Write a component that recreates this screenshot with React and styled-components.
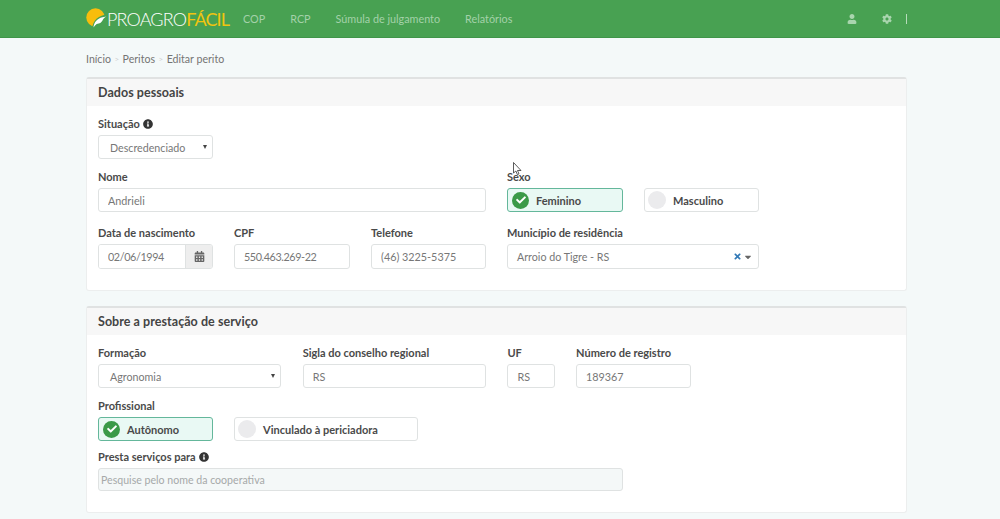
import React from "react";
import styled, { createGlobalStyle } from "styled-components";
import { FaInfoCircle, FaCalendarAlt, FaUser, FaCog, FaCheck, FaTimes, FaCaretDown } from "react-icons/fa";

const GlobalStyle = createGlobalStyle`
  html, body {
    margin: 0;
    padding: 0;
    background: #f4f9f9;
    color: #444;
    font-family: "Lato", "Open Sans", sans-serif;
  }
  * { box-sizing: border-box; }
`;

const Page = styled.div`
  position: relative;
  height: 519px;
  overflow: hidden;
`;

const Header = styled.header`
  height: 38px;
  background: #48a152;
  border-bottom: 1px solid #3f9549;
  padding: 0 93px 0 86px;
  display: flex;
  align-items: center;
`;

const Logo = styled.div`
  width: 144px;
  display: flex;
  align-items: center;
  margin-right: 13px;
  svg { flex: none; }
`;

const LogoText = styled.span`
  font-family: "Lato", sans-serif;
  font-weight: 300;
  font-size: 18px;
  letter-spacing: -0.85px;
  color: #fff;
  white-space: nowrap;
  b { font-weight: 400; color: #f2c40f; }
`;

const Nav = styled.nav`
  display: flex;
  gap: 25px;
  flex: 1;
`;

const NavLink = styled.a`
  font-size: 10.8px;
  color: #a4d1a9;
`;

const HeaderIcons = styled.div`
  display: flex;
  align-items: center;
  color: #a9d5ae;
  font-size: 10px;
  gap: 25px;
`;

const Divider = styled.span`
  width: 1px;
  height: 10px;
  background: #b6dcba;
  margin-left: -11px;
`;

const Main = styled.main`
  width: 821px;
  margin-left: 86px;
`;

const Breadcrumb = styled.div`
  height: 39px;
  padding-top: 3px;
  display: flex;
  align-items: center;
  gap: 3.5px;
  font-size: 10.6px;
  color: #747474;
  span { color: #cfcfcf; font-size: 8px; }
`;

const Card = styled.section`
  background: #fff;
  border: 1px solid #eceeee;
  border-top: 2px solid #e0e2e2;
  border-radius: 3px;
  margin-bottom: 15px;
  height: ${(p) => p.$height}px;
`;

const CardTitle = styled.h2`
  margin: 0;
  height: 27px;
  padding: 0 11px;
  background: #f7f7f7;
  display: flex;
  align-items: center;
  font-size: 12.5px;
  font-weight: 700;
  letter-spacing: 0.05px;
  color: #444;
`;

const CardBody = styled.div`
  padding: 12px 11px 0;
  display: flex;
  flex-direction: column;
`;

const Row = styled.div`
  display: flex;
  gap: ${(p) => p.$gap || 21}px;
  margin-bottom: ${(p) => p.$below || 0}px;
`;

const Field = styled.div`
  width: ${(p) => p.$width}px;
  flex: none;
  margin-bottom: ${(p) => p.$below || 0}px;
`;

const Label = styled.label`
  height: 11px;
  display: flex;
  align-items: center;
  gap: 3px;
  margin-bottom: 6px;
  font-size: 11px;
  font-weight: 700;
  color: #4a4a4a;
  white-space: nowrap;
  svg { font-size: 10px; color: #333; }
`;

const Input = styled.input`
  display: block;
  width: 100%;
  height: ${(p) => p.$h || 24}px;
  padding: 0 ${(p) => (p.$muted ? 2 : 9)}px;
  border: 1px solid #dfe2e2;
  border-radius: 3px;
  background: ${(p) => (p.$muted ? "#f4f8f8" : "#fff")};
  font-family: inherit;
  font-size: ${(p) => (p.$muted ? 10.6 : 10.8)}px;
  letter-spacing: ${(p) => (p.$tight ? -0.4 : 0)}px;
  color: #777;
  outline: none;
  &::placeholder { color: #a6a9a9; opacity: 1; }
`;

const SelectBox = styled.div`
  height: ${(p) => p.$h || 24}px;
  padding: 0 5px 0 ${(p) => p.$pad || 11}px;
  border: 1px solid #dfe2e2;
  border-radius: 3px;
  background: #fff;
  display: flex;
  align-items: center;
  justify-content: space-between;
  font-size: 10.7px;
  color: #777;
`;

const SmallCaret = styled.i`
  width: 0;
  height: 0;
  border-left: 2px solid transparent;
  border-right: 2px solid transparent;
  border-top: 4px solid #444;
`;

const Clear = styled.span`
  display: flex;
  align-items: center;
  gap: 1px;
  font-size: 10px;
  color: #666;
  svg:first-child { color: #337ab7; font-size: 9px; }
`;

const InputGroup = styled.div`
  display: flex;
  height: 25px;
  border: 1px solid #dfe2e2;
  border-radius: 3px;
  overflow: hidden;
`;

const GroupInput = styled.input`
  width: 86px;
  border: 0;
  padding: 0 9px;
  font-family: inherit;
  font-size: 10.8px;
  letter-spacing: -0.4px;
  color: #777;
  outline: none;
`;

const Addon = styled.span`
  flex: 1;
  background: #eeeeee;
  border-left: 1px solid #dfe2e2;
  display: flex;
  align-items: center;
  justify-content: center;
  font-size: 11px;
  color: #666;
`;

const Toggle = styled.div`
  width: ${(p) => p.$width}px;
  height: 24px;
  flex: none;
  display: flex;
  align-items: center;
  padding-left: 3px;
  border: 1px solid ${(p) => (p.$on ? "#64b79b" : "#dfe2e2")};
  border-radius: 3px;
  background: ${(p) => (p.$on ? "#e9f9f4" : "#fff")};
  font-size: 11px;
  font-weight: 700;
  color: #4a4a4a;
`;

const Dot = styled.span`
  flex: none;
  width: ${(p) => (p.$on ? 17 : 18)}px;
  height: ${(p) => (p.$on ? 17 : 18)}px;
  border-radius: 50%;
  background: ${(p) => (p.$on ? "#3b9a48" : "#ebebed")};
  display: flex;
  align-items: center;
  justify-content: center;
  color: #fff;
  font-size: 10px;
  margin-left: ${(p) => (p.$on ? 1 : 0)}px;
  margin-right: 7px;
`;

const Cursor = styled.svg`
  position: absolute;
  left: 513px;
  top: 162px;
`;

const Logomark = () => (
  <svg width="21" height="21" viewBox="0 0 21 21">
    <circle cx="9.500" cy="9.500" r="9.200" fill="#f7bd0c" />
    <path d="M6 21C7 12 12 7.500 21 6.500V21z" fill="#48a152" />
    <path d="M7.500 19.500c.4-5 3.500-9 9-10.200L20.500 8.500c-2.200 1-3.200 2.400-4 4-.9 2-3 3.300-5.800 3.400-1.200.9-2.200 2.200-3.200 3.600z" fill="#fff" />
  </svg>
);

const Select = ({ value }) => (
  <SelectBox>
    {value}
    <SmallCaret />
  </SelectBox>
);

const Option = ({ on, width, children }) => (
  <Toggle $on={on} $width={width}>
    <Dot $on={on}>{on && <FaCheck />}</Dot>
    {children}
  </Toggle>
);

const App = () => {
  return (
    <Page>
      <GlobalStyle />
      <Header>
        <Logo>
          <Logomark />
          <LogoText>
            PROAGRO<b>FÁCIL</b>
          </LogoText>
        </Logo>
        <Nav>
          <NavLink>COP</NavLink>
          <NavLink>RCP</NavLink>
          <NavLink>Súmula de julgamento</NavLink>
          <NavLink>Relatórios</NavLink>
        </Nav>
        <HeaderIcons>
          <FaUser />
          <FaCog />
          <Divider />
        </HeaderIcons>
      </Header>
      <Main>
        <Breadcrumb>
          Início <span>&gt;</span> Peritos <span>&gt;</span> Editar perito
        </Breadcrumb>
        <Card $height={214}>
          <CardTitle>Dados pessoais</CardTitle>
          <CardBody>
            <Field $width={115} $below={12}>
              <Label>
                Situação <FaInfoCircle />
              </Label>
              <Select value="Descredenciado" />
            </Field>
            <Row $below={15}>
              <Field $width={388}>
                <Label>Nome</Label>
                <Input readOnly value="Andrieli" />
              </Field>
              <Field $width={252}>
                <Label>Sexo</Label>
                <Row>
                  <Option on width={116}>Feminino</Option>
                  <Option width={115}>Masculino</Option>
                </Row>
              </Field>
            </Row>
            <Row>
              <Field $width={115}>
                <Label>Data de nascimento</Label>
                <InputGroup>
                  <GroupInput readOnly value="02/06/1994" />
                  <Addon>
                    <FaCalendarAlt />
                  </Addon>
                </InputGroup>
              </Field>
              <Field $width={116}>
                <Label>CPF</Label>
                <Input $h={25} $tight readOnly value="550.463.269-22" />
              </Field>
              <Field $width={115}>
                <Label>Telefone</Label>
                <Input $h={25} readOnly value="(46) 3225-5375" />
              </Field>
              <Field $width={252}>
                <Label>Município de residência</Label>
                <SelectBox $h={25} $pad={9}>
                  Arroio do Tigre - RS
                  <Clear>
                    <FaTimes />
                    <FaCaretDown />
                  </Clear>
                </SelectBox>
              </Field>
            </Row>
          </CardBody>
        </Card>
        <Card $height={207}>
          <CardTitle>Sobre a prestação de serviço</CardTitle>
          <CardBody>
            <Row $gap={21.4} $below={12}>
              <Field $width={183.3}>
                <Label>Formação</Label>
                <Select value="Agronomia" />
              </Field>
              <Field $width={183.3}>
                <Label>Sigla do conselho regional</Label>
                <Input readOnly value="RS" />
              </Field>
              <Field $width={47.3}>
                <Label>UF</Label>
                <Input readOnly value="RS" />
              </Field>
              <Field $width={115.3}>
                <Label>Número de registro</Label>
                <Input readOnly value="189367" />
              </Field>
            </Row>
            <Field $width={320} $below={10}>
              <Label>Profissional</Label>
              <Row>
                <Option on width={115}>Autônomo</Option>
                <Option width={184}>Vinculado à periciadora</Option>
              </Row>
            </Field>
            <Field $width={525}>
              <Label>
                Presta serviços para <FaInfoCircle />
              </Label>
              <Input $muted $h={23} readOnly placeholder="Pesquise pelo nome da cooperativa" />
            </Field>
          </CardBody>
        </Card>
      </Main>
      <Cursor width="9" height="14" viewBox="0 0 9 14">
        <path d="M.5.500v10.500l2.400-2 1.500 3.600 1.600-.7L4.500 8.500H8z" fill="#fff" stroke="#333" strokeWidth=".8" />
      </Cursor>
    </Page>
  );
};

export default App;
